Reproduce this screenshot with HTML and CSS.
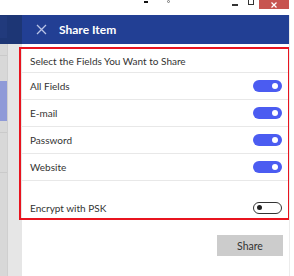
FILE: index.html
```html
<!DOCTYPE html>
<html lang="en">
<head>
    <meta charset="UTF-8">
    <meta name="viewport" content="width=device-width, initial-scale=1.0">
    <title>Share Item</title>
    <link rel="stylesheet" href="styles.css">
</head>
<body>
    <div class="titlebar">
        <span class="mark"></span>
        <span class="dot-mark"></span>
        <span class="spacer"></span>
        <span class="win-min"></span>
        <span class="win-max"></span>
        <span class="win-close">
            <svg width="6" height="6" viewBox="0 0 6 6">
                <path d="M0.5 0.5 L5.5 5.5 M5.5 0.5 L0.5 5.5" stroke="#ffffff" stroke-width="1.2" fill="none"/>
            </svg>
        </span>
    </div>

    <div class="app">
        <div class="sidebar">
            <div class="side-head"><span class="side-tab"></span></div>
            <div class="side-body">
                <div class="side-rail">
                    <div class="rail-item"></div>
                    <div class="rail-item selected"></div>
                    <div class="rail-item"></div>
                    <div class="rail-item"></div>
                </div>
                <div class="side-gap"></div>
            </div>
        </div>

        <div class="flyout">
            <div class="flyout-head">
                <svg class="close-icon" width="11" height="11" viewBox="0 0 11 11">
                    <path d="M1 1 L10 10 M10 1 L1 10" stroke="#b9c3e6" stroke-width="1.3" fill="none"/>
                </svg>
                <span class="flyout-title">Share Item</span>
            </div>

            <div class="flyout-body">
                <div class="highlight">
                    <div class="row title-row">Select the Fields You Want to Share</div>
                    <div class="row">
                        <span>All Fields</span>
                        <span class="toggle on"></span>
                    </div>
                    <div class="row">
                        <span>E-mail</span>
                        <span class="toggle on"></span>
                    </div>
                    <div class="row">
                        <span>Password</span>
                        <span class="toggle on"></span>
                    </div>
                    <div class="row">
                        <span>Website</span>
                        <span class="toggle on"></span>
                    </div>
                    <div class="row psk-row">
                        <span>Encrypt with PSK</span>
                        <span class="toggle off"></span>
                    </div>
                </div>

                <div class="actions">
                    <button class="share-btn">Share</button>
                </div>
            </div>
        </div>

        <div class="edge"></div>
    </div>
</body>
</html>
```

FILE: styles.css
```css
* {
    box-sizing: border-box;
}
body {
    margin: 0;
    width: 294px;
    height: 276px;
    overflow: hidden;
    background: #ffffff;
    font-family: Lato, "Noto Sans", sans-serif;
    font-size: 10px;
    color: #333333;
}

/* window title bar */
.titlebar {
    height: 15px;
    display: flex;
    align-items: flex-start;
    background: #ffffff;
}
.mark {
    width: 4px;
    height: 2px;
    margin: 1px 0 0 144px;
    background: #111111;
}
.dot-mark {
    width: 3px;
    height: 3px;
    margin: 0 0 0 19px;
    border: 1px solid #777777;
    border-radius: 50%;
}
.spacer {
    flex: 1;
}
.win-min {
    width: 6px;
    height: 2px;
    margin-top: 4px;
    background: #333333;
}
.win-max {
    width: 6px;
    height: 5px;
    margin: 0 5px 0 10px;
    border: 1px solid #333333;
    border-top: 0;
}
.win-close {
    width: 30px;
    height: 9px;
    margin-right: 5px;
    background: #c75450;
    display: flex;
    align-items: center;
    justify-content: center;
}

.app {
    display: flex;
    height: 261px;
}

/* left app strip */
.sidebar {
    width: 22px;
    display: flex;
    flex-direction: column;
}
.side-head {
    height: 29px;
    background: #1d3675;
    padding-top: 1px;
}
.side-tab {
    display: block;
    width: 7px;
    height: 22px;
    background: #213a7c;
}
.side-body {
    flex: 1;
    display: flex;
}
.side-rail {
    width: 8px;
    background: #d8d8d8;
    border-right: 1px solid #cfcfcf;
}
.rail-item {
    height: 12px;
    border-bottom: 1px solid #cacaca;
}
.rail-item.selected {
    height: 40px;
    margin-top: 25px;
    background: #8f9ad8;
    border-bottom: 0;
}
.rail-item:last-child {
    margin-top: 28px;
}
.side-gap {
    flex: 1;
    background: #e6e6e6;
}

/* flyout panel */
.flyout {
    width: 267px;
    display: flex;
    flex-direction: column;
    background: #ffffff;
}
.flyout-head {
    height: 29px;
    background: #223f94;
    display: flex;
    align-items: center;
    padding-left: 14px;
}
.close-icon {
    margin-right: 12px;
}
.flyout-title {
    color: #ffffff;
    font-weight: bold;
    font-size: 12px;
}
.flyout-body {
    padding-top: 3px;
}
.highlight {
    margin: 0 -1px 0 -3px;
    border: 2px solid #e8141f;
}
.row {
    display: flex;
    align-items: center;
    justify-content: space-between;
    height: 27px;
    padding: 0 6px 0 9px;
    border-bottom: 1px solid #e8e8e8;
}
.title-row {
    height: 24px;
}
.psk-row {
    height: 37px;
    padding-top: 16px;
    border-bottom: 0;
}

/* switches */
.toggle {
    position: relative;
    width: 29px;
    height: 12px;
    border-radius: 6px;
}
.toggle.on {
    background: #4b5cf1;
}
.toggle.on::after {
    content: "";
    position: absolute;
    right: 4px;
    top: 3px;
    width: 6px;
    height: 6px;
    border-radius: 50%;
    background: #ffffff;
}
.toggle.off {
    border: 1.5px solid #333333;
    background: #ffffff;
}
.toggle.off::after {
    content: "";
    position: absolute;
    left: 3px;
    top: 2px;
    width: 5px;
    height: 5px;
    border-radius: 50%;
    background: #222222;
}

.actions {
    display: flex;
    justify-content: flex-end;
    padding: 15px 6px 0 0;
}
.share-btn {
    width: 66px;
    height: 21px;
    border: none;
    background: #cccccc;
    color: #333333;
    font-family: Lato, "Noto Sans", sans-serif;
    font-size: 10.5px;
    padding: 0;
}

.edge {
    flex: 1;
    border-left: 1px solid #ececec;
}
```
